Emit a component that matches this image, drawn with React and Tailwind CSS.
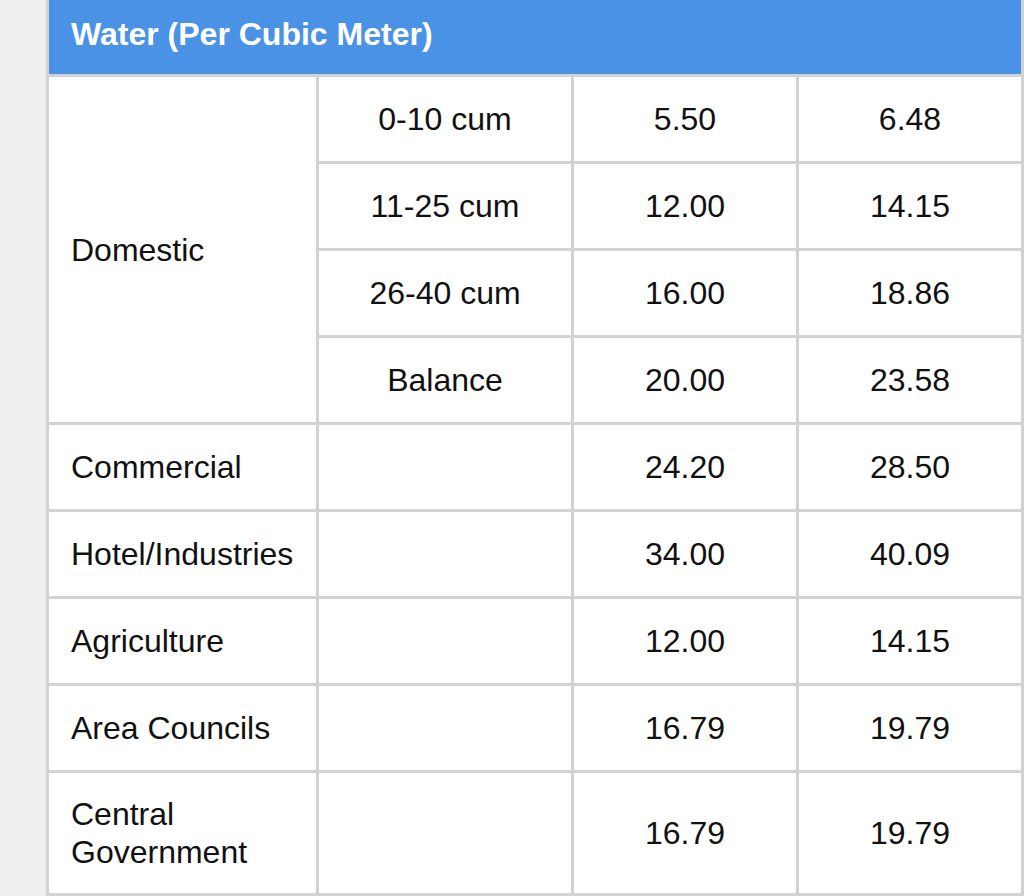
import React from 'react';

const domestic = [
  ['0-10 cum', '5.50', '6.48'],
  ['11-25 cum', '12.00', '14.15'],
  ['26-40 cum', '16.00', '18.86'],
  ['Balance', '20.00', '23.58'],
];

const others = [
  ['Commercial', '24.20', '28.50'],
  ['Hotel/Industries', '34.00', '40.09'],
  ['Agriculture', '12.00', '14.15'],
  ['Area Councils', '16.79', '19.79'],
  ['Central Government', '16.79', '19.79'],
];

const cell = 'bg-white flex items-center justify-center';
const label = 'bg-white flex items-center pl-[22px] pr-4';

export default function App() {
  return (
    <main
      className="min-h-screen bg-[#efefef] pl-[46px] text-[32px] leading-[38px] text-[#111]"
      style={{ fontFamily: '"Liberation Sans", Arial, sans-serif' }}
    >
      <div className="grid grid-cols-[267px_252px_222px_222px] grid-rows-[74px_repeat(8,84px)_120px] gap-[3px] bg-[#d2d2d2] px-[3px] pb-[3px]">
        <div className="col-span-4 bg-[#4a92e6] flex items-center pl-[22px] pb-[7px] font-bold text-white">
          Water (Per Cubic Meter)
        </div>

        <div className={`${label} row-span-4`}>Domestic</div>
        {domestic.map(([range, a, b]) => (
          <React.Fragment key={range}>
            <div className={cell}>{range}</div>
            <div className={cell}>{a}</div>
            <div className={cell}>{b}</div>
          </React.Fragment>
        ))}

        {others.map(([name, a, b]) => (
          <React.Fragment key={name}>
            <div className={label}>{name}</div>
            <div className={cell} />
            <div className={cell}>{a}</div>
            <div className={cell}>{b}</div>
          </React.Fragment>
        ))}
      </div>
    </main>
  );
}
